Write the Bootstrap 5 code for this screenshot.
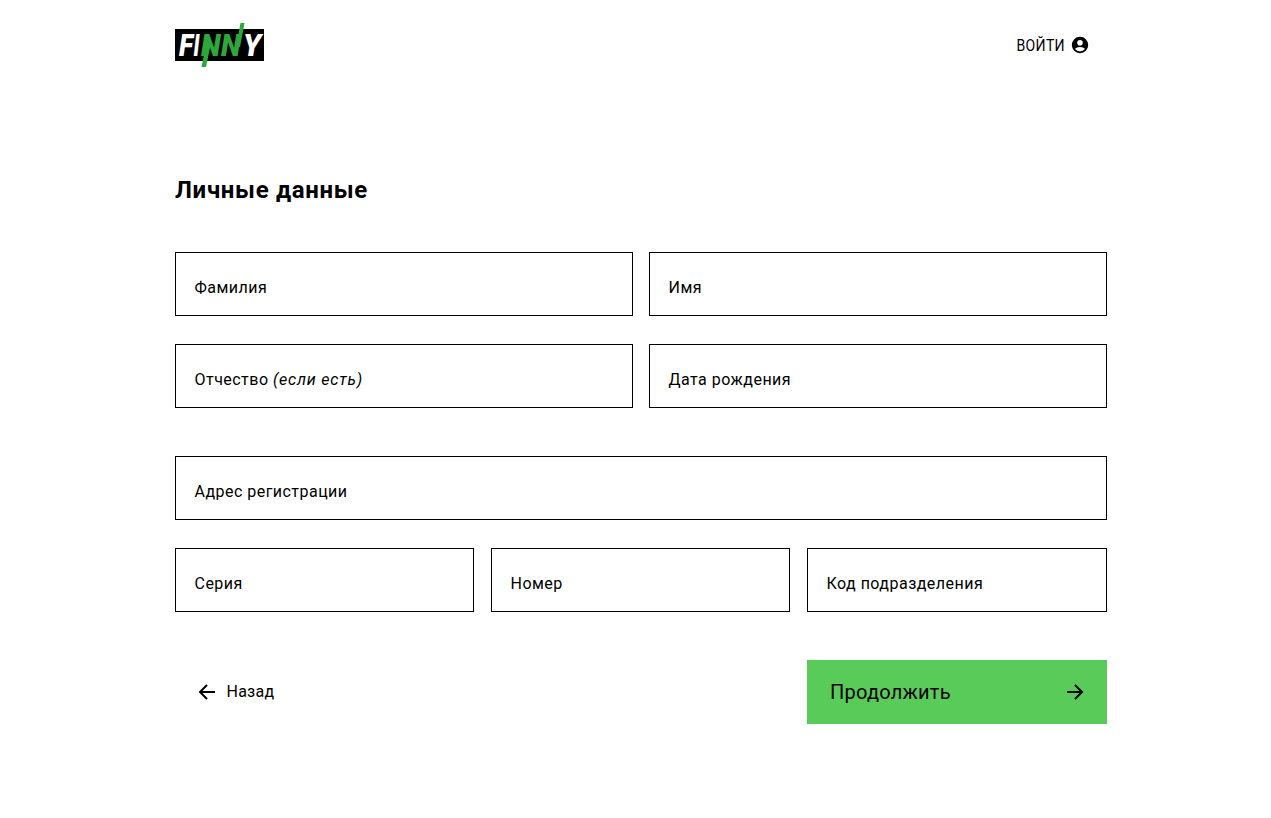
<!DOCTYPE html>
<html lang="ru">
<head>
<meta charset="utf-8">
<title>Личные данные</title>
<link href="https://cdn.jsdelivr.net/npm/bootstrap@5.3.0/dist/css/bootstrap.min.css" rel="stylesheet">
<style>
body{font-family:Roboto,"Liberation Sans",sans-serif;color:#000;background:#fff;}
.page-wrap{width:932px;margin-left:175px;}
.top-bar{height:174px;padding-top:23px;}
.brand-logo{display:block;width:90px;height:44px;}
.brand-text{font-family:Roboto,sans-serif;font-weight:900;font-style:italic;font-size:32px;}
.login-link{color:#000;text-decoration:none;font-size:16px;letter-spacing:.3px;margin-right:18px;margin-top:11px;height:22px;gap:6px;}
.login-text{display:inline-block;transform:scaleX(.88);transform-origin:right center;position:relative;top:1px;}
.page-title{font-size:24px;font-weight:700;line-height:32px;margin:0 0 46px;letter-spacing:.67px;}
.field-box{position:relative;height:64px;}
.field-box .form-control{height:64px;border:1px solid #000;border-radius:0;box-shadow:none;background:transparent;}
.field-label{position:absolute;left:19.5px;top:25px;font-size:16px;line-height:22px;letter-spacing:.47px;pointer-events:none;margin:0;}
.field-label em{letter-spacing:.8px;}
.two-cols{display:grid;grid-template-columns:1fr 1fr;column-gap:16px;row-gap:28px;}
.three-cols{display:grid;grid-template-columns:299px 299px 300px;column-gap:17px;margin-top:28px;}
.block-gap{margin-top:48px;}
.back-link{color:#000;text-decoration:none;font-size:16px;letter-spacing:.25px;padding-left:23px;gap:10.5px;}
.next-btn{width:300px;height:64px;background:#59cb59;border:0;border-radius:0;color:#000;font-size:20px;letter-spacing:.23px;padding:0 23px 0 23px;}
.next-btn:hover{background:#59cb59;color:#000;}
</style>
</head>
<body>
<div class="page-wrap">
  <header class="top-bar d-flex justify-content-between align-items-start">
    <a href="#" class="d-block" aria-label="Finny">
      <svg class="brand-logo" viewBox="0 0 90 44">
        <rect x="0" y="6" width="89" height="32" fill="#000"/>
        <text x="4" y="33" textLength="14" lengthAdjust="spacingAndGlyphs" class="brand-text" fill="#fff">F</text>
        <text x="18.500" y="33" textLength="6" lengthAdjust="spacingAndGlyphs" class="brand-text" fill="#fff">I</text>
        <text x="26" y="33" textLength="19.500" lengthAdjust="spacingAndGlyphs" class="brand-text" fill="#2da83a">N</text>
        <text x="46" y="33" textLength="19.500" lengthAdjust="spacingAndGlyphs" class="brand-text" fill="#2da83a">N</text>
        <text x="68" y="33" textLength="18" lengthAdjust="spacingAndGlyphs" class="brand-text" fill="#fff">Y</text>
        <polygon points="26.500,44 31,44 36,20 31.500,20" fill="#2da83a"/>
        <polygon points="61,24 65,24 69.500,0 65.500,0" fill="#2da83a"/>
      </svg>
    </a>
    <a href="#" class="login-link d-flex align-items-center"><span class="login-text">ВОЙТИ</span>
      <svg width="18" height="18" viewBox="0 0 18 18"><path fill-rule="evenodd" d="M9 .8a8.2 8.2 0 1 0 0 16.4A8.2 8.2 0 0 0 9 .8zm0 3.2a2.8 2.8 0 1 1 0 5.600A2.800 2.800 0 0 1 9 4zm0 11.400a6.400 6.400 0 0 1-5-2.400c.6-1.300 2.900-2.100 5-2.100s4.400.8 5 2.100a6.400 6.400 0 0 1-5 2.400z" fill="#000"/></svg>
    </a>
  </header>

  <h1 class="page-title">Личные данные</h1>

  <form>
    <div class="two-cols">
      <div class="field-box"><input class="form-control" id="f1" type="text"><label class="field-label" for="f1">Фамилия</label></div>
      <div class="field-box"><input class="form-control" id="f2" type="text"><label class="field-label" for="f2">Имя</label></div>
      <div class="field-box"><input class="form-control" id="f3" type="text"><label class="field-label" for="f3">Отчество <em>(если есть)</em></label></div>
      <div class="field-box"><input class="form-control" id="f4" type="text"><label class="field-label" for="f4">Дата рождения</label></div>
    </div>
    <div class="field-box block-gap"><input class="form-control" id="f5" type="text"><label class="field-label" for="f5">Адрес регистрации</label></div>
    <div class="three-cols">
      <div class="field-box"><input class="form-control" id="f6" type="text"><label class="field-label" for="f6">Серия</label></div>
      <div class="field-box"><input class="form-control" id="f7" type="text"><label class="field-label" for="f7">Номер</label></div>
      <div class="field-box"><input class="form-control" id="f8" type="text"><label class="field-label" for="f8">Код подразделения</label></div>
    </div>
    <div class="d-flex justify-content-between align-items-center block-gap">
      <a href="#" class="back-link d-flex align-items-center">
        <svg width="18" height="18" viewBox="0 0 18 18" fill="none" stroke="#000" stroke-width="2"><path d="M17 9H2M9 2 2 9l7 7"/></svg>
        Назад
      </a>
      <button type="button" class="btn next-btn d-flex justify-content-between align-items-center">Продолжить
        <svg width="18" height="18" viewBox="0 0 18 18" fill="none" stroke="#000" stroke-width="2"><path d="M1 9h15M9 2l7 7-7 7"/></svg>
      </button>
    </div>
  </form>
</div>
<script src="https://cdn.jsdelivr.net/npm/bootstrap@5.3.0/dist/js/bootstrap.bundle.min.js"></script>
</body>
</html>
